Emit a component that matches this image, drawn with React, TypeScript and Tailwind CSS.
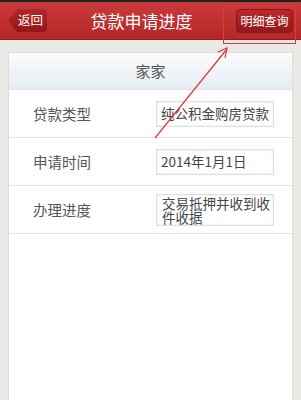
import React from "react";

const rows = [
  { label: "贷款类型", value: "纯公积金购房贷款", multi: false },
  { label: "申请时间", value: "2014年1月1日", multi: false },
  { label: "办理进度", value: "交易抵押并收到收件收据", multi: true },
];

const App = () => {
  return (
    <div className="relative h-[400px] w-[301px] overflow-hidden bg-[#ebe9e6] font-['Noto_Sans_CJK_SC','Noto_Sans',sans-serif]">
      {/* header */}
      <div className="flex h-[40px] items-center justify-between border-t-2 border-b border-t-[#1c241f] border-b-[#8e1a1c] bg-gradient-to-b from-[#cb3a3a] to-[#b42628] px-[8px]">
        <button className="flex h-[23px] w-[39px] items-center justify-end rounded-r-[4px] bg-gradient-to-b from-[#b3272a] to-[#931619] pr-[4px] text-[12.5px] leading-none text-white [clip-path:polygon(9px_0,100%_0,100%_100%,9px_100%,0_50%)]">
          返回
        </button>
        <span className="text-[17px] leading-none text-white">贷款申请进度</span>
        <button className="flex h-[24px] w-[57px] items-center justify-center rounded-[4px] border border-[#8c1518] bg-gradient-to-b from-[#b9292c] to-[#95181b] text-[12px] leading-none text-white">
          明细查询
        </button>
      </div>

      {/* content */}
      <div className="px-[8px] pt-[12px]">
        <div className="h-[400px] border border-[#dedcd8] bg-white">
          <div className="flex h-[37px] items-center justify-center border-b border-[#dfe3e6] bg-gradient-to-b from-[#fbfcfd] to-[#e5edf2] text-[15px] text-[#555]">
            家家
          </div>
          {rows.map((row) => (
            <div
              key={row.label}
              className="flex h-[48px] items-center border-b border-[#e6e6e6] pl-[24px]"
            >
              <span className="w-[123px] text-[14.5px] text-[#555]">{row.label}</span>
              {row.multi ? (
                <div className="h-[32px] w-[118px] overflow-hidden border border-[#d4e2ec] bg-white pl-[5px] pt-[1px] text-[13.5px] leading-[14px] text-[#444] shadow-[inset_0_0_3px_#dbe7f0]">
                  {row.value}
                </div>
              ) : (
                <div className="flex h-[26px] w-[118px] items-center overflow-hidden border border-[#d4e2ec] bg-white pl-[4px] text-[13.5px] leading-none text-[#444] shadow-[inset_0_0_3px_#dbe7f0]">
                  {row.value}
                </div>
              )}
            </div>
          ))}
        </div>
      </div>

      {/* annotation */}
      <div className="absolute left-[223px] top-[6px] h-[38px] w-[73px] border border-[#e2363c]" />
      <svg className="absolute left-0 top-0" width="301" height="400">
        <line x1="155" y1="138" x2="227" y2="49" stroke="#e0343b" strokeWidth="1.2" />
        <polyline points="218,52 227,48 225,58" fill="none" stroke="#e0343b" strokeWidth="1.2" />
      </svg>
    </div>
  );
};

export default App;
